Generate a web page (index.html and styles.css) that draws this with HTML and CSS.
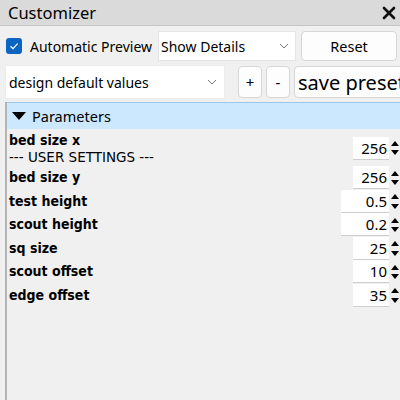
FILE: index.html
```html
<!DOCTYPE html>
<html>
<head>
<meta charset="utf-8">
<link rel="stylesheet" href="styles.css">
</head>
<body>
<div class="win">
  <div class="titlebar">
    <span class="title">Customizer</span>
    <svg class="close" width="14" height="14" viewBox="0 0 14 14"><path d="M2 2 L12 12 M12 2 L2 12" stroke="#111" stroke-width="2.6" stroke-linecap="round"/></svg>
  </div>
  <div class="row2">
    <span class="check"><svg width="16" height="16" viewBox="0 0 16 16"><path d="M4.5 8.2 L7 10.6 L11.6 5.6" fill="none" stroke="#fff" stroke-width="1.2"/></svg></span>
    <span class="autolabel">Automatic Preview</span>
    <div class="combo show">Show Details<svg class="chev" width="10" height="6" viewBox="0 0 10 6"><path d="M1 1 L5 5 L9 1" fill="none" stroke="#777" stroke-width="1"/></svg></div>
    <div class="btn reset">Reset</div>
  </div>
  <div class="row3">
    <div class="combo preset">design default values<svg class="chev" width="10" height="6" viewBox="0 0 10 6"><path d="M1 1 L5 5 L9 1" fill="none" stroke="#777" stroke-width="1"/></svg></div>
    <div class="btn small plus">+</div>
    <div class="btn small">-</div>
    <div class="btn save">save preset</div>
  </div>
  <div class="panel">
    <div class="header"><span class="tri"></span>Parameters</div>
    <div class="params">
      <div class="prow first">
        <div class="lab"><div class="name">bed size x</div><div class="desc">--- USER SETTINGS ---</div></div>
        <div class="spin"><div class="val">256</div><div class="arrows"><span class="up"></span><span class="dn"></span></div></div>
      </div>
      <div class="prow">
        <div class="lab"><div class="name">bed size y</div></div>
        <div class="spin"><div class="val">256</div><div class="arrows"><span class="up"></span><span class="dn"></span></div></div>
      </div>
      <div class="prow">
        <div class="lab"><div class="name">test height</div></div>
        <div class="spin"><div class="val wide">0.5</div><div class="arrows"><span class="up"></span><span class="dn"></span></div></div>
      </div>
      <div class="prow">
        <div class="lab"><div class="name">scout height</div></div>
        <div class="spin"><div class="val wide">0.2</div><div class="arrows"><span class="up"></span><span class="dn"></span></div></div>
      </div>
      <div class="prow">
        <div class="lab"><div class="name">sq size</div></div>
        <div class="spin"><div class="val">25</div><div class="arrows"><span class="up"></span><span class="dn"></span></div></div>
      </div>
      <div class="prow">
        <div class="lab"><div class="name">scout offset</div></div>
        <div class="spin"><div class="val">10</div><div class="arrows"><span class="up"></span><span class="dn"></span></div></div>
      </div>
      <div class="prow">
        <div class="lab"><div class="name">edge offset</div></div>
        <div class="spin"><div class="val">35</div><div class="arrows"><span class="up"></span><span class="dn"></span></div></div>
      </div>
    </div>
  </div>
</div>
</body>
</html>
```
FILE: styles.css
```css
html, body {
  margin: 0;
  padding: 0;
  background: #f0f0f0;
  width: 400px;
  height: 400px;
  overflow: hidden;
}
.win {
  width: 400px;
  height: 400px;
  display: flex;
  flex-direction: column;
  font-family: "Noto Sans", "Open Sans", sans-serif;
  color: #000;
  background: #f0f0f0;
}
.titlebar {
  height: 26px;
  background: #dadada;
  border-bottom: 1px solid #c6c6c6;
  display: flex;
  align-items: center;
  justify-content: space-between;
  padding: 0 2px 0 8px;
  box-sizing: border-box;
  flex: none;
}
.title {
  font-size: 16.5px;
  line-height: 26px;
}
.close {
  margin-right: 2px;
}
.row2 {
  display: flex;
  align-items: center;
  height: 30px;
  margin-top: 5px;
  flex: none;
}
.row2 > *, .row3 > * { flex: none; }
.check {
  width: 16px;
  height: 16px;
  background: #0a64c2;
  border-radius: 3px;
  margin-left: 6px;
  display: block;
}
.check svg { display: block; }
.autolabel {
  font-size: 14px;
  margin-left: 8px;
  white-space: nowrap;
}
.combo {
  background: #fff;
  border: 1px solid #e4e4e4;
  box-sizing: border-box;
  display: flex;
  align-items: center;
  justify-content: space-between;
  font-size: 14px;
  white-space: nowrap;
}
.chev { flex: none; }
.show {
  width: 138px;
  height: 30px;
  margin-left: 6px;
  padding: 0 6px 0 2px;
}
.btn {
  background: #fdfdfd;
  border: 1px solid #d6d6d6;
  border-radius: 4px;
  box-sizing: border-box;
  display: flex;
  align-items: center;
  justify-content: center;
  white-space: nowrap;
  font-size: 14.5px;
}
.reset {
  width: 96px;
  height: 30px;
  margin-left: 5px;
}
.row3 {
  display: flex;
  align-items: center;
  height: 34px;
  margin-top: 4px;
  padding-left: 5px;
  flex: none;
}
.preset {
  width: 220px;
  height: 34px;
  padding: 0 7px 0 3px;
  border-color: #ececec;
}
.small {
  width: 24px;
  height: 32px;
  font-size: 15px;
  margin-left: 4px;
}
.small.plus { margin-left: 13px; }
.save {
  width: 120px;
  height: 32px;
  margin-left: 4px;
  font-size: 20px;
  justify-content: flex-start;
  padding-left: 3px;
}
.panel {
  margin-top: 3px;
  margin-left: 5px;
  border-left: 2px solid #b4b4b4;
  flex: 1;
  display: flex;
  flex-direction: column;
}
.header {
  height: 26px;
  background: #cce8ff;
  border-top: 1px solid #99c9ef;
  display: flex;
  align-items: center;
  font-size: 14.5px;
  padding-left: 5px;
  flex: none;
}
.tri {
  width: 0;
  height: 0;
  border-left: 7px solid transparent;
  border-right: 7px solid transparent;
  border-top: 8px solid #000;
  margin-right: 6px;
}
.params {
  padding-top: 1px;
  padding-left: 2px;
}
.prow {
  display: flex;
  align-items: center;
  justify-content: space-between;
  height: 23.5px;
}
.prow.first { height: 36px; }
.name {
  font-family: "DejaVu Sans Condensed", "DejaVu Sans", sans-serif;
  font-stretch: condensed;
  font-weight: bold;
  font-size: 14px;
  line-height: 17px;
}
.desc {
  font-family: "DejaVu Sans", sans-serif;
  font-size: 13.5px;
  line-height: 16px;
}
.spin {
  display: flex;
  align-items: stretch;
  height: 23px;
}
.val {
  width: 36px;
  background: #fff;
  border-bottom: 1px solid #cfcfcf;
  box-sizing: border-box;
  text-align: right;
  padding-right: 2px;
  font-size: 15px;
  line-height: 22px;
}
.val.wide { width: 48px; }
.arrows {
  width: 11px;
  display: flex;
  flex-direction: column;
  justify-content: space-around;
  align-items: center;
  padding: 2px 0;
  box-sizing: border-box;
}
.up {
  width: 0; height: 0;
  border-left: 4px solid transparent;
  border-right: 4px solid transparent;
  border-bottom: 5px solid #000;
}
.dn {
  width: 0; height: 0;
  border-left: 4px solid transparent;
  border-right: 4px solid transparent;
  border-top: 5px solid #000;
}
```
